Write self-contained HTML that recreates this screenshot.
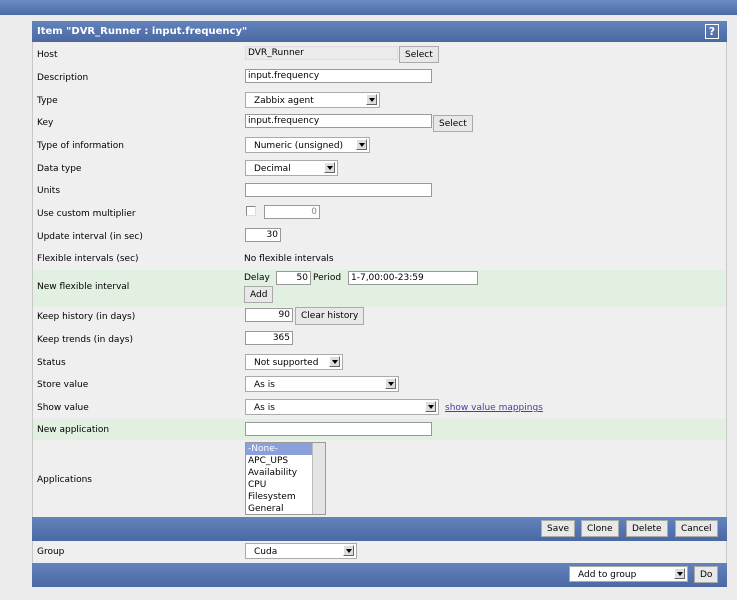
<!DOCTYPE html>
<html><head><style>
*{margin:0;padding:0;box-sizing:border-box}
body{width:737px;height:600px;background:#ececec;font-family:"DejaVu Sans",Verdana,sans-serif;font-size:9px;color:#000;position:relative;overflow:hidden}
.top{position:absolute;left:0;top:0;width:737px;height:15px;background:linear-gradient(#6d8cc4,#4c6ba6)}
.panel{position:absolute;left:32px;top:21px;width:695px;height:566px;background:#efefef;border:1px solid #c8c8c8}
.bar{position:absolute;left:32px;width:695px;background:linear-gradient(#6482bc,#4a68a2)}
.a{position:absolute;white-space:nowrap}
.lbl{position:absolute;left:37px}
.in{position:absolute;background:#fff;border:1px solid #999;height:14px;padding:0 2px;font-size:9px;line-height:13px}
.sel{position:absolute;background:#fff;border:1px solid #aaa;height:16px;padding:0 8px;line-height:16px}
.sel i{position:absolute;right:2px;top:1px;width:11px;height:11px;background:#ddd;border:1px solid #666;border-top-color:#fff;border-left-color:#fff}
.sel i:after{content:"";position:absolute;left:2px;top:3px;border:3px solid transparent;border-top:4px solid #000;border-bottom:0}
.btn{position:absolute;background:#e8e8e8;border:1px solid #aaa;height:17px;padding:0 5px;line-height:17px}
.g{position:absolute;left:33px;width:693px;background:#e1f0e1}
</style></head><body>
<div class="top"></div>
<div class="panel"></div>
<div class="bar" style="top:21px;height:21px"></div>
<div class="a" style="left:37px;top:26px;color:#fff;font-weight:bold;font-size:10px">Item "DVR_Runner : input.frequency"</div>
<div class="a" style="left:705px;top:24px;width:14px;height:15px;border:1px solid #fff;color:#fff;font-weight:bold;font-size:11px;text-align:center;line-height:13px">?</div>
<div class="g" style="top:270px;height:37px"></div>
<div class="g" style="top:419px;height:21px"></div>

<div class="lbl" style="top:50px">Host</div>
<div class="in" style="left:245px;top:46px;width:153px;background:#ebebeb;border-color:#ddd">DVR_Runner</div>
<div class="btn" style="left:399px;top:46px">Select</div>
<div class="lbl" style="top:73px">Description</div>
<div class="in" style="left:245px;top:69px;width:187px">input.frequency</div>
<div class="lbl" style="top:96px">Type</div>
<div class="sel" style="left:245px;top:92px;width:135px">Zabbix agent<i></i></div>
<div class="lbl" style="top:118px">Key</div>
<div class="in" style="left:245px;top:114px;width:187px">input.frequency</div>
<div class="btn" style="left:433px;top:115px">Select</div>
<div class="lbl" style="top:141px">Type of information</div>
<div class="sel" style="left:245px;top:137px;width:125px">Numeric (unsigned)<i></i></div>
<div class="lbl" style="top:164px">Data type</div>
<div class="sel" style="left:245px;top:160px;width:93px">Decimal<i></i></div>
<div class="lbl" style="top:186px">Units</div>
<div class="in" style="left:245px;top:183px;width:187px"></div>
<div class="lbl" style="top:209px">Use custom multiplier</div>
<div class="a" style="left:246px;top:206px;width:10px;height:10px;border:1px solid #888;border-right-color:#ddd;border-bottom-color:#ddd;background:#fff"></div>
<div class="in" style="left:264px;top:205px;width:56px;text-align:right;color:#888">0</div>
<div class="lbl" style="top:232px">Update interval (in sec)</div>
<div class="in" style="left:245px;top:228px;width:36px;text-align:right">30</div>
<div class="lbl" style="top:254px">Flexible intervals (sec)</div>
<div class="a" style="left:244px;top:254px">No flexible intervals</div>
<div class="lbl" style="top:282px">New flexible interval</div>
<div class="a" style="left:244px;top:273px">Delay</div>
<div class="in" style="left:276px;top:271px;width:35px;text-align:right">50</div>
<div class="a" style="left:313px;top:273px">Period</div>
<div class="in" style="left:348px;top:271px;width:130px">1-7,00:00-23:59</div>
<div class="btn" style="left:244px;top:286px">Add</div>
<div class="lbl" style="top:312px">Keep history (in days)</div>
<div class="in" style="left:245px;top:308px;width:48px;text-align:right">90</div>
<div class="btn" style="left:295px;top:307px;height:18px">Clear history</div>
<div class="lbl" style="top:335px">Keep trends (in days)</div>
<div class="in" style="left:245px;top:331px;width:48px;text-align:right">365</div>
<div class="lbl" style="top:358px">Status</div>
<div class="sel" style="left:245px;top:354px;width:98px">Not supported<i></i></div>
<div class="lbl" style="top:380px">Store value</div>
<div class="sel" style="left:245px;top:376px;width:154px">As is<i></i></div>
<div class="lbl" style="top:403px">Show value</div>
<div class="sel" style="left:245px;top:399px;width:194px">As is<i></i></div>
<div class="a" style="left:445px;top:403px;color:#4a3ea0;text-decoration:underline">show value mappings</div>
<div class="lbl" style="top:425px">New application</div>
<div class="in" style="left:245px;top:422px;width:187px"></div>
<div class="lbl" style="top:475px">Applications</div>
<div class="a" style="left:245px;top:442px;width:81px;height:73px;background:#fff;border:1px solid #999;overflow:hidden;line-height:12px">
<div style="background:#8aa0dc;color:#fff;width:66px;padding-left:2px">-None-</div>
<div style="padding-left:2px">APC_UPS<br>Availability<br>CPU<br>Filesystem<br>General</div>
<div style="position:absolute;right:0;top:0;width:13px;height:71px;background:#e4e4e4;border-left:1px solid #bbb"></div>
</div>
<div class="bar" style="top:517px;height:24px"></div>
<div class="btn" style="left:541px;top:520px">Save</div>
<div class="btn" style="left:581px;top:520px">Clone</div>
<div class="btn" style="left:626px;top:520px">Delete</div>
<div class="btn" style="left:675px;top:520px">Cancel</div>
<div class="lbl" style="top:547px">Group</div>
<div class="sel" style="left:245px;top:543px;width:112px">Cuda<i></i></div>
<div class="bar" style="top:563px;height:24px"></div>
<div class="sel" style="left:569px;top:566px;width:119px;height:16px">Add to group<i></i></div>
<div class="btn" style="left:694px;top:566px">Do</div>
</body></html>
